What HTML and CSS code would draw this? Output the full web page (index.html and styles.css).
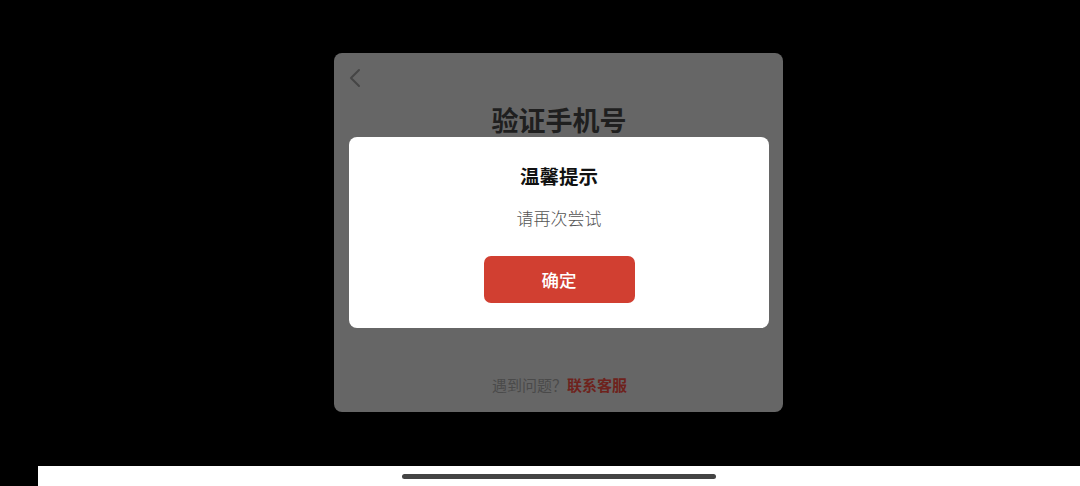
FILE: index.html
```html
<!DOCTYPE html>
<html lang="zh">
<head>
<meta charset="utf-8">
<link rel="stylesheet" href="styles.css">
</head>
<body>
<div class="screen">
  <div class="card">
    <div class="back">
      <svg width="14" height="20" viewBox="0 0 14 20"><path d="M11 2 L3 10 L11 18" fill="none" stroke="#454545" stroke-width="2" stroke-linecap="round" stroke-linejoin="round"/></svg>
    </div>
    <h1 class="title">验证手机号</h1>
    <div class="spacer"></div>
    <p class="help">遇到问题？<span class="contact">联系客服</span></p>
    <div class="dialog">
      <h2 class="dlg-title">温馨提示</h2>
      <p class="dlg-msg">请再次尝试</p>
      <button class="dlg-btn">确定</button>
    </div>
  </div>
</div>
<div class="homebar"><div class="indicator"></div></div>
</body>
</html>
```
FILE: styles.css
```css
* { box-sizing: border-box; }
html, body { margin: 0; padding: 0; background: #000; }
body {
  width: 1080px;
  height: 486px;
  overflow: hidden;
  font-family: "Noto Sans CJK SC", "Noto Sans", sans-serif;
}
.screen {
  height: 466px;
  padding-top: 53px;
  padding-left: 334px;
}
.card {
  position: relative;
  width: 449px;
  height: 359px;
  background: #666666;
  border-radius: 8px;
  display: flex;
  flex-direction: column;
  align-items: center;
}
.back {
  align-self: flex-start;
  margin: 15px 0 0 14px;
  height: 20px;
  line-height: 0;
}
.title {
  margin: 15px 0 0;
  font-size: 27px;
  line-height: 34px;
  font-weight: 700;
  color: #1f1f1f;
  padding-left: 1px;
}
.spacer { flex: 1; }
.help {
  margin: 0 0 17px;
  font-size: 15px;
  line-height: 20px;
  color: #4a4a4a;
  padding-left: 2px;
}
.contact { color: #6e221c; font-weight: 700; }
.dialog {
  position: absolute;
  left: 15px;
  top: 84px;
  width: 420px;
  height: 191px;
  background: #fff;
  border-radius: 8px;
  display: flex;
  flex-direction: column;
  align-items: center;
}
.dlg-title {
  margin: 25px 0 0;
  font-size: 19.5px;
  line-height: 28px;
  font-weight: 700;
  color: #111;
}
.dlg-msg {
  margin: 16px 0 0;
  font-size: 17px;
  line-height: 24px;
  font-weight: 300;
  color: #555;
}
.dlg-btn {
  margin-top: 26px;
  width: 151px;
  height: 47px;
  border: none;
  border-radius: 7px;
  background: #d13f31;
  color: #fff;
  font-family: inherit;
  font-size: 17.5px;
  font-weight: 500;
}
.homebar {
  margin-left: 38px;
  height: 20px;
  background: #fff;
  display: flex;
  justify-content: center;
  padding-top: 8px;
}
.indicator {
  width: 314px;
  height: 5px;
  border-radius: 3px;
  background: #444;
}
```
